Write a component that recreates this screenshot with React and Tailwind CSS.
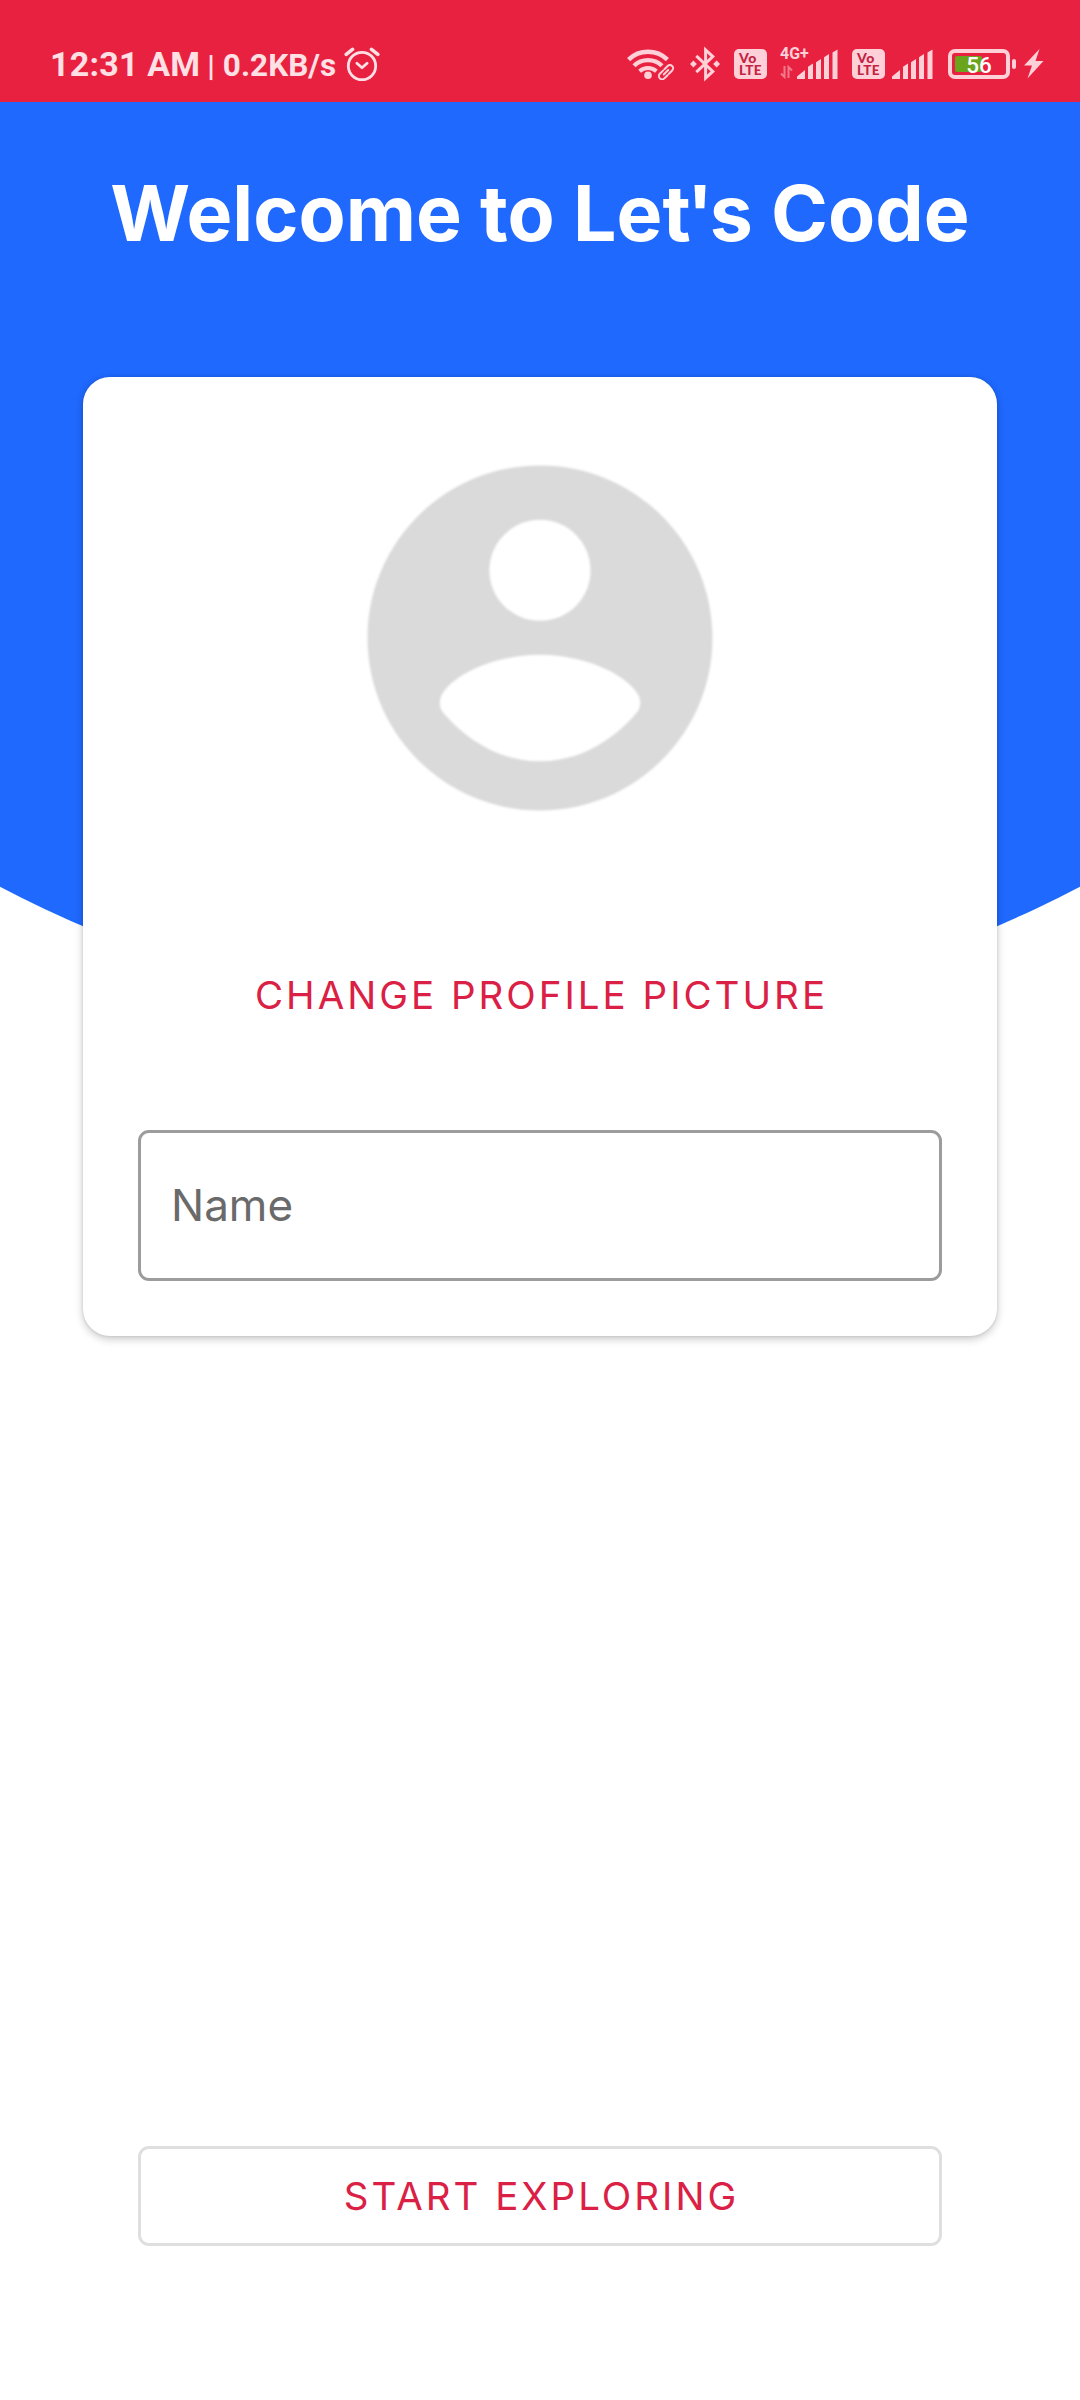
import React from "react";

const AlarmIcon = () => (
  <svg
    viewBox="0 0 36 36"
    fill="none"
    stroke="currentColor"
    strokeWidth="2.8"
    strokeLinecap="round"
    strokeLinejoin="round"
    className="h-9 w-9"
  >
    <circle cx="18" cy="20" r="13.7" />
    <path d="M12.9 17.3 18 21.8l5.1-4.5" />
    <path d="M2.2 8.3 8.5 3.4M27.5 3.4l6.3 4.9" strokeWidth="3.6" />
  </svg>
);

const WifiIcon = () => (
  <svg viewBox="0 0 48 32" fill="none" stroke="currentColor" className="h-8 w-12">
    <path d="M1.6 11.6a28 28 0 0 1 38.8 0" strokeWidth="4.6" />
    <path d="M7 17.8a20 20 0 0 1 28 0" strokeWidth="4.4" />
    <path d="M12.6 23.2a12.5 12.5 0 0 1 16.8 0" strokeWidth="4" />
    <circle cx="21" cy="27.2" r="3.8" fill="currentColor" stroke="none" />
    {/* link badge */}
    <g
      strokeWidth="2"
      transform="rotate(-45 39 24.2)"
      strokeLinecap="round"
    >
      <path d="M38 21h-4.5a3.2 3.2 0 0 0 0 6.4H38M40 21h4.5a3.2 3.2 0 0 1 0 6.4H40" />
      <path d="M35.8 24.2h6.4" />
    </g>
  </svg>
);

const BluetoothIcon = () => (
  <svg
    viewBox="0 0 30 36"
    fill="none"
    stroke="currentColor"
    strokeWidth="3"
    className="h-9 w-[30px]"
  >
    <path d="M6.3 9.8 22.8 25.4 15.6 32V4l7.2 6.6L6.3 26.2" />
    <path
      d="m3.4 14.5 3.5 3.5-3.5 3.5L0 18zM26.6 14.5 30 18l-3.4 3.5-3.5-3.5z"
      fill="currentColor"
      stroke="none"
    />
  </svg>
);

const VolteBadge = () => (
  <div className="flex h-[30px] w-[33px] flex-col justify-center rounded-[5px] bg-[#ffd0d8] pl-[5px] font-[Lato] leading-none font-black text-[#c22343]">
    <span className="h-[13px] text-[14px] leading-[13px] tracking-[0.5px]">Vo</span>
    <span className="h-[13px] text-[13.5px] leading-[13px] tracking-[0.4px]">LTE</span>
  </div>
);

const SignalIcon = () => (
  <svg viewBox="0 0 41 30" fill="currentColor" className="h-[30px] w-[41px]">
    <path d="M0 30v-2.5L8 21v9zM11 30V17.8l5-3.2V30zM19 30V13.2l5-3.2V30zM27 30V8.2L32 5v25zM35.5 30V3.6l5-3.2V30z" />
  </svg>
);

const BatteryIcon = () => (
  <div className="flex items-center">
    <div className="grid h-[30px] w-[62px] rounded-[7px] border-4 border-[#ffd0d8] px-[3px] pt-[3px] pb-0.5">
      <div className="col-start-1 row-start-1 h-4 w-[27px] rounded-[2px] bg-[#6aa31c]" />
      <span className="col-start-1 row-start-1 pt-px text-center text-[22.5px] leading-4 font-medium text-white">
        56
      </span>
    </div>
    <div className="ml-0.5 h-2.5 w-1 rounded-[2px] bg-[#ffd0d8]" />
  </div>
);

const BoltIcon = () => (
  <svg viewBox="0 0 20 30" fill="currentColor" className="h-[30px] w-5">
    <path d="M15.5 0 0 16.5h8L3.5 29.5 19.5 12h-8z" />
  </svg>
);

const StatusBar = () => (
  <div className="flex h-[102px] justify-between bg-[#e82140] pt-[46px] pr-9 pl-[50px] font-[Roboto] text-[#ffd0d8]">
    <div className="flex h-9 items-center text-[#ffe0e5]">
      <div className="flex items-baseline pt-0.5 font-bold">
        <span className="text-[34px] leading-9 tracking-[0.2px]">12:31 AM</span>
        <span className="ml-[7px] text-[30px] leading-9 font-bold">|</span>
        <span className="ml-2 text-[31.5px] leading-9">0.2KB/s</span>
      </div>
      <div className="ml-2">
        <AlarmIcon />
      </div>
    </div>

    <div className="flex h-9 items-center">
      <WifiIcon />
      <div className="ml-[15px]">
        <BluetoothIcon />
      </div>
      <div className="ml-3.5">
        <VolteBadge />
      </div>
      <div className="relative ml-[30px]">
        <SignalIcon />
        <span className="absolute -top-[3px] -left-[17px] text-[16px] leading-4 font-bold">
          4G+
        </span>
        <svg
          viewBox="0 0 14 14"
          fill="none"
          stroke="currentColor"
          strokeWidth="2"
          className="absolute bottom-0 -left-[17px] h-3.5 w-3.5 opacity-50"
        >
          <path d="M4.5 1v11L1 8.5M8.5 13V2L12 5.5" />
        </svg>
      </div>
      <div className="ml-3.5">
        <VolteBadge />
      </div>
      <div className="ml-[7px]">
        <SignalIcon />
      </div>
      <div className="ml-[15px]">
        <BatteryIcon />
      </div>
      <div className="ml-2">
        <BoltIcon />
      </div>
    </div>
  </div>
);

const ProfileCard = () => (
  <div className="mx-[83px] mt-[95px] flex h-[959px] flex-col items-center rounded-[27px] bg-white px-[55px] pt-[54px] shadow-[0_3px_8px_rgba(0,0,0,0.22),0_0_3px_rgba(0,0,0,0.12)]">
    <svg
      viewBox="0 0 24 24"
      fill="#dadada"
      className="h-[414px] w-[414px] shrink-0 blur-[1px]"
    >
      <path d="M12 2C6.48 2 2 6.48 2 12s4.48 10 10 10 10-4.48 10-10S17.52 2 12 2zm0 3.15c1.62 0 2.93 1.31 2.93 2.93S13.62 11 12 11s-2.93-1.31-2.93-2.92S10.38 5.15 12 5.15zm0 14c-2.9 0-4.85-1.9-5.65-2.87-.2-.28-.2-.68-.05-.98C7.05 14 9.6 12.97 12 12.97s4.95 1.03 5.7 2.33c.15.3.15.7-.05.98-.8.97-2.75 2.87-5.65 2.87z" />
    </svg>
    <button className="mt-[104px] h-[94px] pl-[3px] text-[38.5px] tracking-[3px] text-[#db2045]">
      CHANGE PROFILE PICTURE
    </button>
    <div className="mt-[87px] flex h-[151px] w-full items-center rounded-[11px] border-3 border-[#9c9c9c] px-[30px] pb-0.5 text-[44px] text-[#6a6a6a]">
      Name
    </div>
  </div>
);

const App = () => {
  return (
    <div className="flex h-[2400px] w-[1080px] flex-col bg-white font-[Inter,sans-serif]">
      <StatusBar />

      {/* the curved backdrop and the page content share one grid cell */}
      <div className="grid flex-1">
        <div className="col-start-1 row-start-1 bg-[#1f69ff] [clip-path:circle(1160px_at_540px_-242px)]" />
        <div className="z-10 col-start-1 row-start-1 flex flex-col">
          <h1 className="mt-16 h-[116px] text-center text-[77px] leading-[94px] font-bold text-white">
            Welcome to Le<span className="tracking-[-3.5px]">t'</span>s Code
          </h1>
          <ProfileCard />
          <button className="mx-[138px] mt-auto mb-[154px] h-[100px] rounded-[11px] border-3 border-[#dfdfdf] pt-0.5 pl-[3px] text-[38.5px] tracking-[3px] text-[#db2045]">
            START EXPLORING
          </button>
        </div>
      </div>
    </div>
  );
};

export default App;
